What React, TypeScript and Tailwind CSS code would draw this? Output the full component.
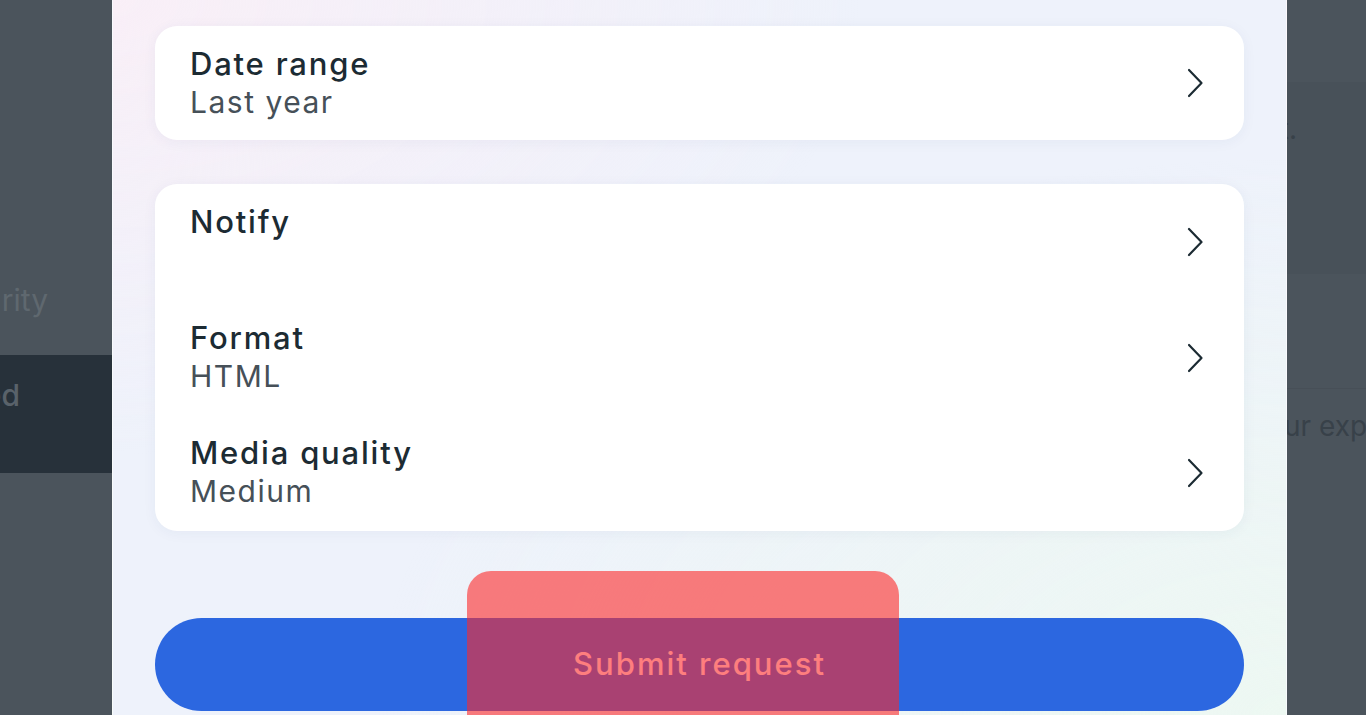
import React from "react";

type Row = { title: string; value?: string };

const dateRows: Row[] = [{ title: "Date range", value: "Last year" }];
const optionRows: Row[] = [
  { title: "Notify" },
  { title: "Format", value: "HTML" },
  { title: "Media quality", value: "Medium" },
];

function Chevron() {
  return (
    <svg width="18" height="30" viewBox="0 0 18 30" fill="none" className="shrink-0">
      <polyline
        points="3,2 15.5,15 3,28"
        stroke="#1c2b33"
        strokeWidth="2.2"
        strokeLinecap="round"
        strokeLinejoin="round"
      />
    </svg>
  );
}

function SettingRow({ row, h }: { row: Row; h: string }) {
  return (
    <button className={`flex w-full items-center justify-between pl-[35px] pr-[40px] text-left ${h}`}>
      <div className="flex h-full flex-col justify-start pt-[19px]">
        <span className="text-[31px] leading-[38px] font-medium text-[#1c2b33] tracking-[1.8px]">
          {row.title}
        </span>
        <span className="text-[30px] leading-[39px] font-normal text-[#465058] tracking-[1.5px]">
          {row.value ?? ""}
        </span>
      </div>
      <Chevron />
    </button>
  );
}

function Card({ rows, h }: { rows: Row[]; h: string }) {
  return (
    <div className="overflow-hidden rounded-[22px] bg-white shadow-[0_2px_14px_rgba(40,60,120,0.05)]">
      {rows.map((r) => (
        <SettingRow key={r.title} row={r} h={h} />
      ))}
    </div>
  );
}

export default function App() {
  return (
    <div className="flex h-[715px] w-full overflow-hidden bg-[#4b545c] font-['Inter',sans-serif]">
      {/* dimmed sidebar behind the dialog */}
      <aside className="flex w-[112px] shrink-0 flex-col overflow-hidden text-[30px] text-[#5f686f]">
        <div className="h-[245px]" />
        <div className="flex h-[110px] items-center justify-end whitespace-nowrap pr-[64px]">
          Password and security
        </div>
        <div className="flex h-[118px] items-start justify-end whitespace-nowrap bg-[#27313a] pr-[92px] pt-[18px] text-[#59626a] font-medium">
          Meta Verified
        </div>
        <div className="flex-1" />
      </aside>

      {/* dialog */}
      <main className="relative w-[1175px] shrink-0 overflow-hidden border-x border-white/60 bg-[#eef2fb] bg-[radial-gradient(ellipse_at_top_left,#f9eff7_0%,transparent_45%),radial-gradient(ellipse_at_bottom_right,#edf8f2_0%,transparent_55%)] px-[42px] pt-[26px]">
        <Card rows={dateRows} h="h-[114px]" />
        <div className="mt-[44px]">
          <Card rows={optionRows} h="h-[115.7px]" />
        </div>
        <button className="mt-[87px] flex h-[93px] w-full items-center justify-center rounded-full bg-[#2c67e0] text-[31px] font-medium text-white tracking-[2px]">
          Submit request
        </button>
        <div className="absolute left-[354px] top-[571px] h-[160px] w-[432px] rounded-t-[24px] bg-[rgba(253,40,40,0.6)]" />
      </main>

      {/* dimmed page content on the right */}
      <aside className="flex flex-1 flex-col overflow-hidden text-[28px] text-[#384149]">
        <div className="h-[82px]" />
        <div className="h-[192px] bg-[#485159] pt-[26px]">
          <div className="flex w-[10px] justify-end whitespace-nowrap">
            to your account.
          </div>
        </div>
        <div className="h-[115px] border-b border-[#474f57]" />
        <div className="pt-[16px] whitespace-nowrap">
          <span className="-ml-[3px] block">ur exports</span>
        </div>
      </aside>
    </div>
  );
}
